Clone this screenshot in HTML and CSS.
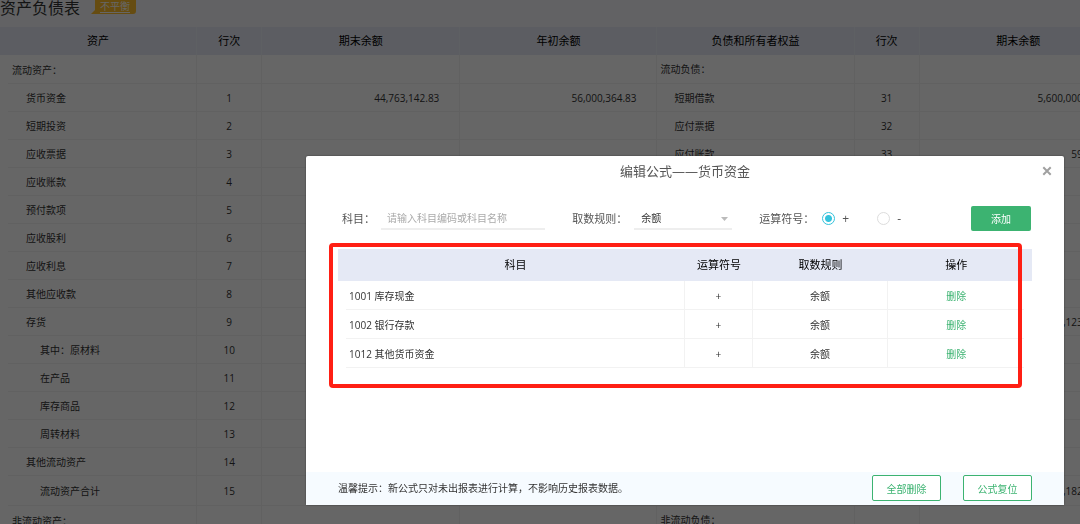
FILE: index.html
```html
<!DOCTYPE html>
<html lang="zh-CN">
<head>
    <meta charset="UTF-8">
    <title>资产负债表</title>
    <link rel="stylesheet" href="styles.css">
</head>
<body>

<div class="page">
    <header class="page-head">
        <h1>资产负债表</h1>
        <a href="#" class="badge">
            <svg width="45" height="15" viewBox="0 0 45 15"><path d="M4 0H45V11Q45 14 42 14H0L4 10Z" fill="#ffbf2b"/></svg>
            <span>不平衡</span>
        </a>
    </header>

    <table class="sheet">
        <colgroup>
            <col class="w-name"><col class="w-line"><col class="w-money"><col class="w-name">
            <col class="w-name"><col class="w-line"><col class="w-money"><col class="w-name">
        </colgroup>
        <thead>
            <tr><th>资产</th><th>行次</th><th>期末余额</th><th>年初余额</th><th>负债和所有者权益</th><th>行次</th><th>期末余额</th><th>年初余额</th></tr>
        </thead>
        <tbody>
            <tr class="section"><td>流动资产：</td><td></td><td></td><td></td><td>流动负债：</td><td></td><td></td><td></td></tr>
            <tr><td class="in1">货币资金</td><td>1</td><td>44,763,142.83</td><td>56,000,364.83</td><td class="in1">短期借款</td><td>31</td><td>5,600,000.00</td><td></td></tr>
            <tr><td class="in1">短期投资</td><td>2</td><td></td><td></td><td class="in1">应付票据</td><td>32</td><td></td><td></td></tr>
            <tr><td class="in1">应收票据</td><td>3</td><td></td><td></td><td class="in1">应付账款</td><td>33</td><td>59.00</td><td></td></tr>
            <tr><td class="in1">应收账款</td><td>4</td><td></td><td></td><td></td><td></td><td></td><td></td></tr>
            <tr><td class="in1">预付款项</td><td>5</td><td></td><td></td><td></td><td></td><td></td><td></td></tr>
            <tr><td class="in1">应收股利</td><td>6</td><td></td><td></td><td></td><td></td><td></td><td></td></tr>
            <tr><td class="in1">应收利息</td><td>7</td><td></td><td></td><td></td><td></td><td></td><td></td></tr>
            <tr><td class="in1">其他应收款</td><td>8</td><td></td><td></td><td></td><td></td><td></td><td></td></tr>
            <tr><td class="in1">存货</td><td>9</td><td></td><td></td><td></td><td></td><td>50,123.00</td><td></td></tr>
            <tr><td class="in2">其中：原材料</td><td>10</td><td></td><td></td><td></td><td></td><td></td><td></td></tr>
            <tr><td class="in2">在产品</td><td>11</td><td></td><td></td><td></td><td></td><td></td><td></td></tr>
            <tr><td class="in2">库存商品</td><td>12</td><td></td><td></td><td></td><td></td><td></td><td></td></tr>
            <tr><td class="in2">周转材料</td><td>13</td><td></td><td></td><td></td><td></td><td></td><td></td></tr>
            <tr><td class="in1">其他流动资产</td><td>14</td><td></td><td></td><td></td><td></td><td></td><td></td></tr>
            <tr class="total"><td class="in2">流动资产合计</td><td>15</td><td></td><td></td><td></td><td></td><td>50,182.00</td><td></td></tr>
            <tr class="section"><td>非流动资产：</td><td></td><td></td><td></td><td>非流动负债：</td><td></td><td></td><td></td></tr>
        </tbody>
    </table>
</div>

<div class="overlay">
    <div class="modal" role="dialog" aria-labelledby="modalTitle">
        <div class="modal-head">
            <h2 id="modalTitle">编辑公式——货币资金</h2>
            <button type="button" class="close" aria-label="关闭">
                <svg width="10" height="10" viewBox="0 0 10 10"><path d="M1.3 1.3L8.7 8.7M8.7 1.3L1.3 8.7" stroke="#a0a0a0" stroke-width="2"/></svg>
            </button>
        </div>

        <form class="formula">
            <label for="subject">科目：</label>
            <input type="text" id="subject" class="subject" placeholder="请输入科目编码或科目名称">
            <label for="rule">取数规则：</label>
            <div class="select">
                <select id="rule"><option>余额</option></select>
                <svg width="7" height="4" viewBox="0 0 7 4"><path d="M0 0H7L3.5 4Z" fill="#bbb"/></svg>
            </div>
            <span class="sign-title" id="signTitle">运算符号：</span>
            <div class="signs" role="radiogroup" aria-labelledby="signTitle">
                <label class="sign"><input type="radio" name="sign" checked>+</label>
                <label class="sign"><input type="radio" name="sign">-</label>
            </div>
            <button type="button" class="btn-add">添加</button>
        </form>

        <div class="list">
            <table class="items">
                <colgroup><col class="c-subject"><col class="c-sign"><col class="c-rule"><col class="c-rule"></colgroup>
                <thead>
                    <tr><th>科目</th><th>运算符号</th><th>取数规则</th><th>操作</th></tr>
                </thead>
                <tbody>
                    <tr><td>1001 库存现金</td><td>+</td><td>余额</td><td><a href="#">删除</a></td></tr>
                    <tr><td>1002 银行存款</td><td>+</td><td>余额</td><td><a href="#">删除</a></td></tr>
                    <tr><td>1012 其他货币资金</td><td>+</td><td>余额</td><td><a href="#">删除</a></td></tr>
                </tbody>
            </table>
            <div class="highlight"></div>
        </div>

        <div class="modal-foot">
            <p>温馨提示：新公式只对未出报表进行计算，不影响历史报表数据。</p>
            <button type="button" class="btn-line">全部删除</button>
            <button type="button" class="btn-line">公式复位</button>
        </div>
    </div>
</div>

</body>
</html>
```
FILE: styles.css
```css
* {
    box-sizing: border-box;
}

body {
    margin: 0;
    background: #fff;
    color: #333;
    font-family: "Open Sans", "Noto Sans CJK SC", sans-serif;
    font-size: 10px;
    line-height: 16px;
}

button, input, select {
    font-family: inherit;
    font-size: 10px;
    color: inherit;
}

a {
    text-decoration: none;
}

h1, h2, p {
    margin: 0;
    font-weight: normal;
}

.page {
    height: 100vh;
    overflow: hidden;
}

.page-head {
    display: flex;
    gap: 11px;
    height: 27px;
    background: #f4f6fa;
}

h1 {
    font-size: 16px;
    line-height: 16px;
}

.badge {
    position: relative;
    height: 15px;
    color: #fff;
}

.badge svg {
    display: block;
}

.badge span {
    position: absolute;
    top: 0;
    left: 9px;
    height: 13px;
    line-height: 12px;
    white-space: nowrap;
    border-bottom: 1px solid #fff;
}

/* balance sheet */
.sheet {
    width: 1315px;
    table-layout: fixed;
    border-collapse: separate;
    border-spacing: 0;
}

.w-name { width: 197px; }
.w-line { width: 65px; }
.w-money { width: 198px; }

.sheet th {
    height: 28px;
    padding: 0;
    background: #e5e9f5;
    border-right: 1px solid #eceff8;
    color: #000;
    font-size: 11px;
    font-weight: normal;
}

.sheet td {
    height: 28px;
    padding: 0 20px 0 3px;
    border-right: 1px solid #f2f2f2;
    border-bottom: 1px solid #f2f2f2;
    text-align: right;
}

.sheet .section td {
    height: 29px;
}

.sheet .total td {
    height: 30px;
}

.sheet td:nth-child(4n + 1) {
    text-align: left;
}

.sheet td:first-child {
    padding-left: 12px;
    border-bottom: none;
    background: linear-gradient(#f2f2f2, #f2f2f2) 8px 100% / 100% 1px no-repeat;
}

.sheet td:nth-child(4n + 2) {
    padding: 0;
    text-align: center;
}

.sheet td.in1 { padding-left: 17px; }
.sheet td.in1:first-child { padding-left: 26px; }
.sheet td.in2:first-child { padding-left: 40px; }

/* dialog */
.overlay {
    position: fixed;
    inset: 0;
    padding: 156px 16px 0 306px;
    background: rgba(0, 0, 0, 0.6);
}

.modal {
    background: #fff;
    border-radius: 2px;
    box-shadow: 0 0 2px rgba(0, 0, 0, 0.5);
}

.modal-head {
    position: relative;
    padding: 6px 0;
    text-align: center;
}

h2 {
    color: #555;
    font-size: 13px;
    line-height: 18px;
}

.close {
    position: absolute;
    top: 10px;
    right: 12px;
    width: 10px;
    height: 10px;
    padding: 0;
    border: none;
    background: none;
}

.close svg {
    display: block;
}

.formula {
    display: flex;
    align-items: center;
    padding: 20px 33px 0 36px;
    color: #555;
    font-size: 11px;
}

.subject {
    flex: 1;
    min-width: 0;
    height: 22px;
    margin: 0 27px 0 6px;
    padding: 0 6px;
    border: none;
    border-bottom: 2px solid #eee;
}

.subject::placeholder {
    color: #aaa;
}

.select {
    position: relative;
    width: 98px;
    margin: 0 27px 0 7px;
    color: #333;
}

.select select {
    display: block;
    width: 100%;
    height: 22px;
    padding: 0 7px;
    border: none;
    border-bottom: 2px solid #eee;
    background: none;
    appearance: none;
}

.select svg {
    position: absolute;
    top: 9px;
    right: 4px;
}

.signs {
    display: flex;
    gap: 28px;
    margin: 0 70px 0 8px;
    font-size: 12px;
}

.sign {
    display: flex;
    align-items: center;
    gap: 7px;
}

.sign input {
    width: 13px;
    height: 13px;
    margin: 0;
    appearance: none;
    border: 1px solid #ddd;
    border-radius: 50%;
}

.sign input:checked {
    border-color: #35c3dc;
    background: radial-gradient(circle, #35c3dc 3px, #fff 4px);
}

.btn-add {
    width: 60px;
    height: 25px;
    padding: 0;
    border: none;
    border-radius: 2px;
    background: #3cb371;
    color: #fff;
}

/* formula items */
.list {
    position: relative;
    min-height: 241px;
    margin: 0 32px;
    padding: 18px 8px 0;
}

.items {
    width: 100%;
    table-layout: fixed;
    border-collapse: separate;
    border-spacing: 0;
}

.c-subject { width: 50%; }
.c-sign { width: 10%; }
.c-rule { width: 20%; }

.items th {
    height: 32px;
    padding: 0;
    background: #e5e9f5;
    color: #000;
    font-size: 11px;
    font-weight: normal;
}

.items th:first-child { box-shadow: -8px 0 0 #e5e9f5; }
.items th:last-child { box-shadow: 8px 0 0 #e5e9f5; }

.items td {
    height: 29px;
    padding: 1px 0 0;
    border-right: 1px solid #f2f2f2;
    border-bottom: 1px solid #f2f2f2;
    text-align: center;
}

.items td:first-child {
    padding-left: 3px;
    text-align: left;
}

.items td:last-child {
    border-right: none;
}

.items a {
    color: #3cb371;
}

.highlight {
    position: absolute;
    top: 12px;
    left: -9px;
    right: 10px;
    height: 145px;
    border: 4px solid #ff1f14;
    border-radius: 4px;
    pointer-events: none;
}

.modal-foot {
    display: flex;
    align-items: center;
    gap: 22px;
    padding: 3px 32px 4px;
    background: #f6fbff;
}

.modal-foot p {
    flex: 1;
}

.btn-line {
    width: 69px;
    height: 26px;
    padding: 0;
    border: 1px solid #3cb371;
    border-radius: 2px;
    background: #fff;
    color: #3cb371;
}
```
